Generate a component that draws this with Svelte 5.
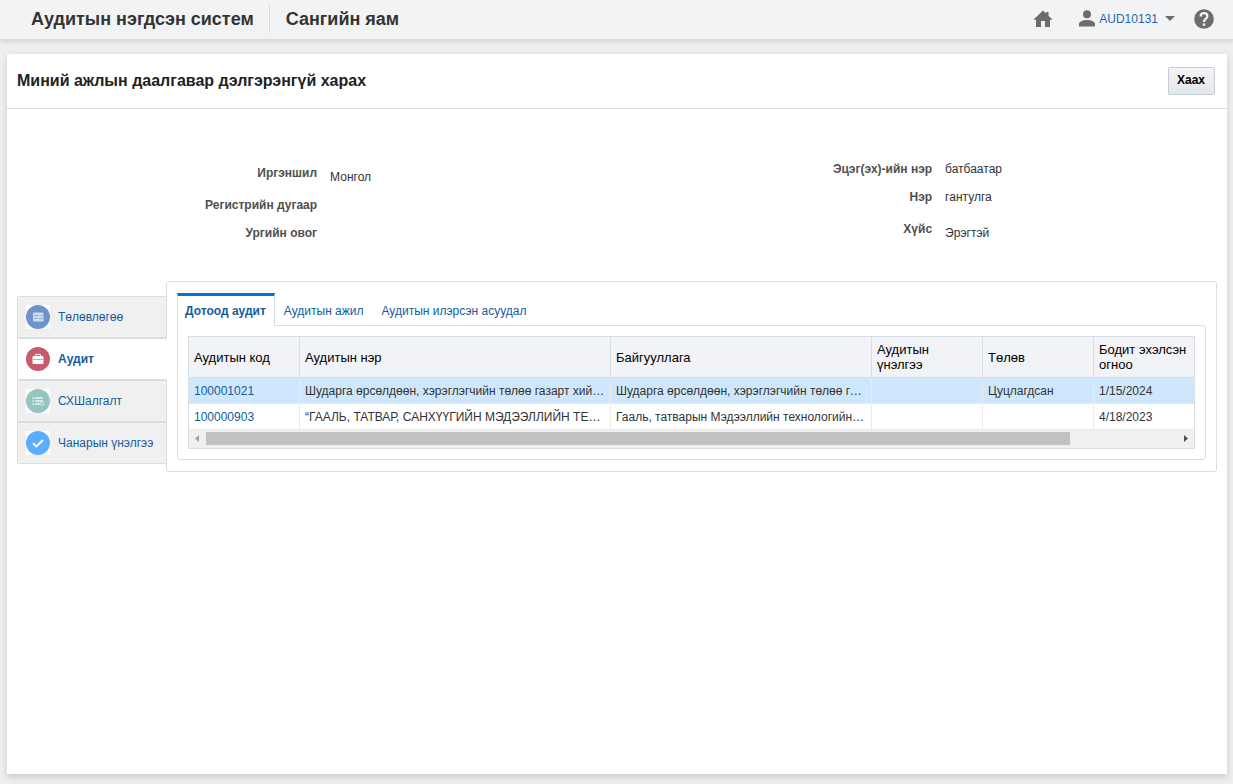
<script lang="ts">
    type Field = { label: string; value: string; low?: boolean };

    const leftFields: Field[] = [
        { label: "Иргэншил", value: "Монгол", low: true },
        { label: "Регистрийн дугаар", value: "" },
        { label: "Ургийн овог", value: "" },
    ];

    const rightFields: Field[] = [
        { label: "Эцэг(эх)-ийн нэр", value: "батбаатар" },
        { label: "Нэр", value: "гантулга" },
        { label: "Хүйс", value: "Эрэгтэй", low: true },
    ];

    const sideTabs = [
        { id: "plan", label: "Төлөвлөгөө", color: "#6e93c8" },
        { id: "audit", label: "Аудит", color: "#c75a6c" },
        { id: "check", label: "СХШалгалт", color: "#94c5c1" },
        { id: "quality", label: "Чанарын үнэлгээ", color: "#5badff" },
    ];

    const tabs = ["Дотоод аудит", "Аудитын ажил", "Аудитын илэрсэн асуудал"];

    const columns = [
        { label: "Аудитын код", width: 111 },
        { label: "Аудитын нэр", width: 311 },
        { label: "Байгууллага", width: 261 },
        { label: "Аудитын үнэлгээ", width: 111 },
        { label: "Төлөв", width: 111 },
        { label: "Бодит эхэлсэн огноо", width: 0 },
    ];

    const rows = [
        {
            code: "100001021",
            name: "Шударга өрсөлдөөн, хэрэглэгчийн төлөө газарт хийсэн аудит",
            org: "Шударга өрсөлдөөн, хэрэглэгчийн төлөө газар",
            rating: "",
            status: "Цуцлагдсан",
            started: "1/15/2024",
        },
        {
            code: "100000903",
            name: "“ГААЛЬ, ТАТВАР, САНХҮҮГИЙН МЭДЭЭЛЛИЙН ТЕХНОЛОГИ”",
            org: "Гааль, татварын Мэдээллийн технологийн төв",
            rating: "",
            status: "",
            started: "4/18/2023",
        },
    ];

    let activeSide = $state("audit");
    let activeTab = $state(0);
    let selected = $state("100001021");
</script>

{#snippet fieldList(fields: Field[])}
    <dl>
        {#each fields as field (field.label)}
            <div class="field" class:low={field.low}>
                <dt>{field.label}</dt>
                <dd>{field.value}</dd>
            </div>
        {/each}
    </dl>
{/snippet}

<header>
    <span class="brand">Аудитын нэгдсэн систем</span>
    <span class="org">Сангийн яам</span>
    <nav>
        <a class="home" href="#home" aria-label="Нүүр">
            <svg width="20" height="18" viewBox="0 0 20 18">
                <path fill="#6b6c6e" d="M10 0.5 L0.4 9.8 H3 V17 H8 V11 H12 V17 H17 V9.8 H19.6 L15.5 5.8 V2 H13.2 V3.6 Z" />
            </svg>
        </a>
        <button class="user" type="button">
            <svg width="16" height="17" viewBox="0 0 16 17">
                <circle cx="8" cy="4.2" r="4" fill="#6b6c6e" />
                <path fill="#6b6c6e" d="M0 16.5 V14 C0 11.5 4.5 10 8 10 S16 11.5 16 14 V16.5 Z" />
            </svg>
            <span>AUD10131</span>
            <svg width="10" height="5" viewBox="0 0 10 5">
                <path fill="#6b6c6e" d="M0 0 H10 L5 5 Z" />
            </svg>
        </button>
        <button class="help" type="button" aria-label="Тусламж">
            <svg width="20" height="20" viewBox="0 0 20 20">
                <circle cx="10" cy="10" r="9.8" fill="#6b6c6e" />
                <path fill="none" stroke="#f2f3f5" stroke-width="2.2" d="M6.6 7.6 C6.6 5.2 8.2 4.2 10 4.2 S13.4 5.3 13.4 7.3 C13.4 9.6 10 9.8 10 13" />
                <rect x="8.8" y="14.4" width="2.4" height="2.4" fill="#f2f3f5" />
            </svg>
        </button>
    </nav>
</header>

<main>
    <div class="title-bar">
        <h1>Миний ажлын даалгавар дэлгэрэнгүй харах</h1>
        <button class="close" type="button">Хаах</button>
    </div>

    <section class="details">
        {@render fieldList(leftFields)}
        {@render fieldList(rightFields)}
    </section>

    <div class="workspace">
        <div class="side" role="tablist" aria-orientation="vertical">
            {#each sideTabs as item (item.id)}
                <button
                    type="button"
                    role="tab"
                    aria-selected={activeSide === item.id}
                    class:active={activeSide === item.id}
                    onclick={() => (activeSide = item.id)}
                >
                    <svg width="24" height="24" viewBox="0 0 24 24">
                        <rect width="24" height="24" fill="#fff" />
                        <circle cx="12" cy="12" r="12" fill={item.color} />
                        {#if item.id === "plan"}
                            <rect x="7" y="7.5" width="10.5" height="9" rx="1" fill="#cfdcee" />
                            <path stroke="#8fabd5" d="M8 10.5 H13 M14.5 10.5 H17 M8 13.5 H11 M12.5 13.5 H17" />
                        {:else if item.id === "audit"}
                            <path fill="#fff" d="M7.5 9 H16.5 Q17.5 9 17.5 10 V16 Q17.5 17 16.5 17 H7.5 Q6.5 17 6.5 16 V10 Q6.5 9 7.5 9 Z" />
                            <path fill="none" stroke="#fff" d="M9.7 9 V7.4 H14.3 V9" />
                            <path stroke="#e0a0aa" d="M6.5 12.5 H17.5" />
                        {:else if item.id === "check"}
                            <path stroke="#d3e8e6" stroke-width="2" d="M6.5 9 H8 M9 9 H17 M6.5 12 H8 M9 12 H17 M6.5 15 H8 M9 15 H14" />
                            <circle cx="16" cy="14.6" r="1.8" fill="#94c5c1" stroke="#d3e8e6" />
                        {:else}
                            <path fill="none" stroke="#fff" stroke-width="2" d="M7 12.2 L10.4 15.4 L17 9" />
                        {/if}
                    </svg>
                    <span>{item.label}</span>
                </button>
            {/each}
        </div>

        <div class="panel">
            <div class="tabs" role="tablist">
                {#each tabs as tab, i (tab)}
                    <button
                        type="button"
                        role="tab"
                        aria-selected={activeTab === i}
                        class:active={activeTab === i}
                        onclick={() => (activeTab = i)}>{tab}</button
                    >
                {/each}
            </div>

            <div class="tab-body">
                <div class="grid">
                    <table>
                        <colgroup>
                            {#each columns as col (col.label)}
                                <col style:width={col.width ? `${col.width}px` : "auto"} />
                            {/each}
                        </colgroup>
                        <thead>
                            <tr>
                                {#each columns as col (col.label)}
                                    <th scope="col">{col.label}</th>
                                {/each}
                            </tr>
                        </thead>
                        <tbody>
                            {#each rows as row (row.code)}
                                <tr class:selected={selected === row.code} onclick={() => (selected = row.code)}>
                                    <td><a href="#{row.code}">{row.code}</a></td>
                                    <td>{row.name}</td>
                                    <td>{row.org}</td>
                                    <td>{row.rating}</td>
                                    <td>{row.status}</td>
                                    <td>{row.started}</td>
                                </tr>
                            {/each}
                        </tbody>
                    </table>
                    <div class="scrollbar" aria-hidden="true">
                        <svg width="17" height="17" viewBox="0 0 17 17"><path fill="#a3a3a3" d="M10 5 V12 L6 8.5 Z" /></svg>
                        <div class="track"><div class="thumb"></div></div>
                        <svg width="17" height="17" viewBox="0 0 17 17"><path fill="#505050" d="M7 5 V12 L11 8.5 Z" /></svg>
                    </div>
                </div>
            </div>
        </div>
    </div>
</main>

<style>
    :global(body) {
        background: #eeeeee;
    }

    :global(#app) {
        display: flex;
        flex-direction: column;
        min-height: 100vh;
        font-family: "Liberation Sans", Arial, sans-serif;
        font-size: 12px;
        color: #333;
    }

    button {
        font: inherit;
        border: 0;
        padding: 0;
        background: none;
        cursor: pointer;
    }

    svg {
        display: block;
        flex: none;
    }

    header {
        display: flex;
        align-items: center;
        height: 37px;
        padding: 0 19px 2px 31px;
        background: #f2f3f5;
        border-bottom: 1px solid #d9dadb;
        box-shadow: 0 1px 5px rgba(0, 0, 0, 0.15);
        font-size: 18px;
        font-weight: bold;
    }

    .brand,
    .org {
        line-height: 28px;
    }

    .brand {
        padding-right: 15px;
        border-right: 1px solid #d6d9dc;
    }

    .org {
        padding-left: 16px;
    }

    nav {
        display: flex;
        align-items: center;
        margin-left: auto;
        font-size: 12px;
        font-weight: normal;
    }

    .user {
        display: flex;
        align-items: center;
        margin: 0 19px 0 26px;
        color: #1f67ab;
    }

    .user span {
        margin: 0 7px 0 4px;
    }

    main {
        flex: 1;
        margin: 14px 6px 10px 7px;
        background: #fff;
        box-shadow: 0 3px 6px rgba(0, 0, 0, 0.15);
    }

    .title-bar {
        display: flex;
        align-items: center;
        justify-content: space-between;
        height: 54px;
        padding: 0 12px 0 10px;
        border-bottom: 1px solid #d6dfe6;
    }

    h1 {
        margin: 0;
        font-size: 16px;
        color: #222;
    }

    .close {
        height: 28px;
        padding: 0 9px 2px 8px;
        border: 1px solid #c4ced7;
        border-radius: 2px;
        background: linear-gradient(#f3f4f5, #e3e7ea);
        font-weight: bold;
        color: #000;
    }

    .details {
        display: flex;
        gap: 10px;
        padding: 46px 0 34px;
    }

    dl {
        flex: 1;
        margin: 0;
    }

    .field {
        display: grid;
        grid-template-columns: 11fr 10fr;
        column-gap: 13px;
        min-height: 28px;
        line-height: 28px;
    }

    .field.low,
    .field.low dd {
        padding-top: 4px;
    }

    dt {
        text-align: right;
        font-weight: bold;
        color: #4f4f4f;
    }

    dd {
        margin: 0;
    }

    .workspace {
        display: flex;
        align-items: flex-start;
        padding: 0 10px;
    }

    .side {
        display: flex;
        flex-direction: column;
        width: 148px;
        margin-top: 15px;
        border: 1px solid #d6dfe6;
        border-right: 0;
        border-radius: 2px 0 0 2px;
    }

    .side button {
        display: flex;
        align-items: center;
        gap: 8px;
        height: 40px;
        padding-left: 8px;
        background: #f0f0f0;
        color: #145c9e;
    }

    .side button + button {
        border-top: 2px solid #d6dfe6;
        height: 42px;
    }

    .side button.active {
        position: relative;
        z-index: 1;
        margin-right: -1px;
        background: #fff;
        font-weight: bold;
    }

    .panel {
        flex: 1;
        min-width: 0;
        padding: 11px 10px;
        border: 1px solid #d6dfe6;
        border-radius: 3px;
    }

    .tabs {
        display: flex;
        height: 32px;
    }

    .tabs button {
        padding: 3px 9px 0;
        color: #145c9e;
    }

    .tabs button.active {
        position: relative;
        z-index: 1;
        margin-bottom: -1px;
        padding: 0 8px 0 7px;
        border: 1px solid #d6dfe6;
        border-top: 3px solid #0572ce;
        border-bottom: 0;
        background: #fff;
        font-weight: bold;
    }

    .tab-body {
        padding: 10px;
        border: 1px solid #d6dfe6;
        border-radius: 0 3px 3px 3px;
    }

    .grid {
        border: 1px solid #d6dfe6;
    }

    table {
        width: 100%;
        table-layout: fixed;
        border-collapse: separate;
        border-spacing: 0;
    }

    th,
    td {
        box-sizing: border-box;
        text-align: left;
        border-right: 1px solid #e9ebed;
        border-bottom: 1px solid #e9ebed;
    }

    th {
        height: 41px;
        padding: 0 5px;
        background: #f2f3f7;
        border-color: #d6dfe6;
        font-size: 13px;
        font-weight: normal;
        line-height: 15px;
        color: #000;
    }

    th:last-child,
    td:last-child {
        border-right: 0;
    }

    td {
        height: 26px;
        padding: 0 5px;
        overflow: hidden;
        text-overflow: ellipsis;
        white-space: nowrap;
    }

    .selected td {
        background: #cfe7fc;
    }

    a {
        color: #145c9e;
        text-decoration: none;
    }

    .scrollbar {
        display: flex;
        height: 18px;
        background: #f0f0f0;
    }

    .track {
        flex: 1;
        padding: 2px 0 3px;
    }

    .thumb {
        width: 89%;
        height: 100%;
        background: #c1c1c1;
    }
</style>
